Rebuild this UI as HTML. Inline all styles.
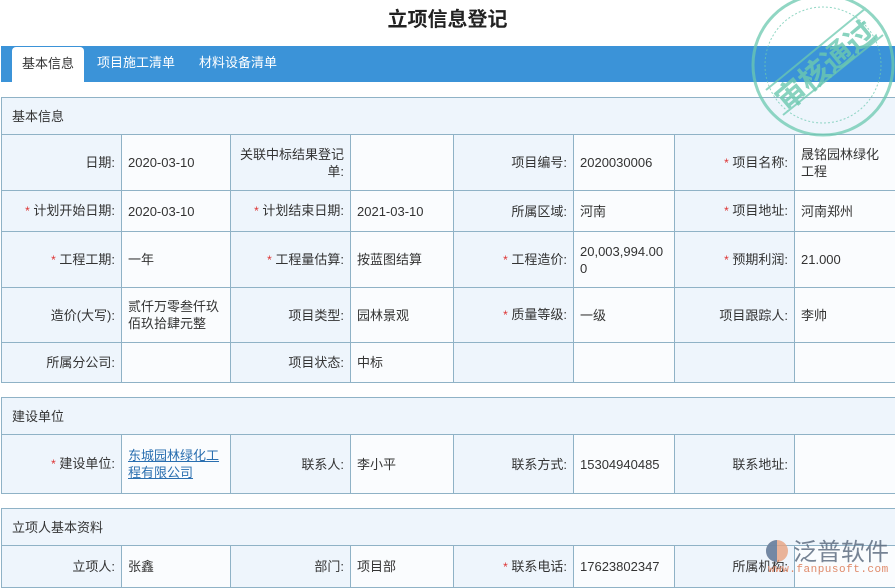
<!DOCTYPE html>
<html><head><meta charset="utf-8"><style>
*{margin:0;padding:0;box-sizing:border-box}
body{width:895px;height:584px;overflow:hidden;background:#fff;font-family:"Liberation Sans","Noto Sans CJK SC",sans-serif;font-size:13px;color:#333;position:relative}
h1{position:absolute;top:3px;left:0;width:895px;text-align:center;font-size:20px;font-weight:bold;color:#222}
.tabs{position:absolute;top:46px;left:1px;width:894px;height:36px;background:#3b93d8}
.tab{position:absolute;top:0;height:36px;line-height:34px;color:#fff;font-size:13px}
.tab.on{background:#fff;color:#333;top:1px;height:35px;border-radius:4px 4px 0 0;padding:0 10px;left:11px}
table{position:absolute;left:1px;width:894px;border-collapse:collapse;table-layout:fixed}
td{border:1px solid #8fb2c6;padding:0 6px;line-height:17px;vertical-align:middle}
td.l{background:#eef5fc;text-align:right}
td.v{background:#fafcfe}
td.h{background:#eef5fc;height:37px;padding-left:10px}
.r{color:#d33;font-size:12px}
a{color:#2a6fb0;text-decoration:underline}
</style></head><body>
<h1>立项信息登记</h1>
<div class="tabs">
<div class="tab on">基本信息</div>
<div class="tab" style="left:96px">项目施工清单</div>
<div class="tab" style="left:198px">材料设备清单</div>
</div>
<table style="top:97px">
<colgroup><col style="width:120px"><col style="width:109px"><col style="width:120px"><col style="width:103px"><col style="width:120px"><col style="width:101px"><col style="width:120px"><col style="width:101px"></colgroup>
<tr><td class="h" colspan="8">基本信息</td></tr>
<tr style="height:56px"><td class="l">日期:</td><td class="v">2020-03-10</td><td class="l">关联中标结果登记单:</td><td class="v"></td><td class="l">项目编号:</td><td class="v">2020030006</td><td class="l"><span class="r">*</span> 项目名称:</td><td class="v">晟铭园林绿化工程</td></tr>
<tr style="height:41px"><td class="l"><span class="r">*</span> 计划开始日期:</td><td class="v">2020-03-10</td><td class="l"><span class="r">*</span> 计划结束日期:</td><td class="v">2021-03-10</td><td class="l">所属区域:</td><td class="v">河南</td><td class="l"><span class="r">*</span> 项目地址:</td><td class="v">河南郑州</td></tr>
<tr style="height:56px"><td class="l"><span class="r">*</span> 工程工期:</td><td class="v">一年</td><td class="l"><span class="r">*</span> 工程量估算:</td><td class="v">按蓝图结算</td><td class="l"><span class="r">*</span> 工程造价:</td><td class="v" style="word-break:break-all">20,003,994.000</td><td class="l"><span class="r">*</span> 预期利润:</td><td class="v">21.000</td></tr>
<tr style="height:55px"><td class="l">造价(大写):</td><td class="v">贰仟万零叁仟玖佰玖拾肆元整</td><td class="l">项目类型:</td><td class="v">园林景观</td><td class="l"><span class="r">*</span> 质量等级:</td><td class="v">一级</td><td class="l">项目跟踪人:</td><td class="v">李帅</td></tr>
<tr style="height:40px"><td class="l">所属分公司:</td><td class="v"></td><td class="l">项目状态:</td><td class="v">中标</td><td class="l"></td><td class="v"></td><td class="l"></td><td class="v"></td></tr>
</table>
<table style="top:397px">
<colgroup><col style="width:120px"><col style="width:109px"><col style="width:120px"><col style="width:103px"><col style="width:120px"><col style="width:101px"><col style="width:120px"><col style="width:101px"></colgroup>
<tr><td class="h" colspan="8">建设单位</td></tr>
<tr style="height:59px"><td class="l"><span class="r">*</span> 建设单位:</td><td class="v"><a>东城园林绿化工程有限公司</a></td><td class="l">联系人:</td><td class="v">李小平</td><td class="l">联系方式:</td><td class="v">15304940485</td><td class="l">联系地址:</td><td class="v"></td></tr>
</table>
<table style="top:508px">
<colgroup><col style="width:120px"><col style="width:109px"><col style="width:120px"><col style="width:103px"><col style="width:120px"><col style="width:101px"><col style="width:120px"><col style="width:101px"></colgroup>
<tr><td class="h" colspan="8">立项人基本资料</td></tr>
<tr style="height:42px"><td class="l">立项人:</td><td class="v">张鑫</td><td class="l">部门:</td><td class="v">项目部</td><td class="l"><span class="r">*</span> 联系电话:</td><td class="v">17623802347</td><td class="l">所属机构:</td><td class="v"></td></tr>
</table>
<svg style="position:absolute;left:748px;top:-10px" width="150" height="150" viewBox="0 0 150 150">
<g fill="none" stroke="#6cc9b0" opacity="0.75">
<circle cx="75" cy="75" r="70" stroke-width="3"/>
<circle cx="75" cy="75" r="58" stroke-width="1" stroke-dasharray="2 2"/>
<line x1="18" y1="100" x2="118" y2="18" stroke-width="2"/>
<line x1="35" y1="125" x2="135" y2="45" stroke-width="2"/>
</g>
<text x="78" y="86" transform="rotate(-40 78 76)" text-anchor="middle" font-size="30" font-weight="bold" fill="#6cc9b0" opacity="0.8" font-family="Noto Sans CJK SC,sans-serif">审核通过</text>
</svg>
<div style="position:absolute;left:766px;top:540px;width:22px;height:22px;border-radius:50%;background:#e7a27f;opacity:.8"></div>
<div style="position:absolute;left:766px;top:540px;width:11px;height:22px;border-radius:11px 0 0 11px;background:#557da6;opacity:.8"></div>
<div style="position:absolute;left:793px;top:536px;font-size:24px;color:#5f6f82;opacity:.85;font-family:'Noto Sans CJK SC',sans-serif;line-height:28px">泛普软件</div>
<div style="position:absolute;left:768px;top:564px;font-size:11px;color:#e08a6a;font-family:'Liberation Mono',monospace;letter-spacing:.5px">www.fanpusoft.com</div>
</body></html>
